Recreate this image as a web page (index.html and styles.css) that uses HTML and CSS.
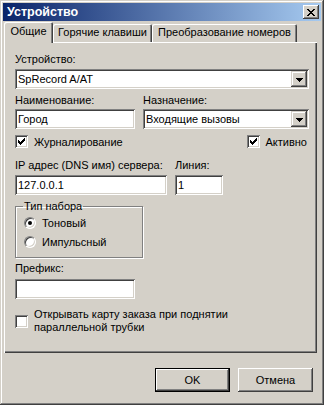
FILE: index.html
```html
<!DOCTYPE html>
<html lang="ru">
<head>
<meta charset="utf-8">
<title>Устройство</title>
<link rel="stylesheet" href="styles.css">
</head>
<body>
<div class="window">
  <div class="titlebar">
    <span class="title">Устройство</span>
    <span class="close"><svg width="8" height="7" viewBox="0 0 8 7" shape-rendering="crispEdges"><path d="M0 0h2v1h-2zM6 0h2v1h-2zM1 1h2v1h-2zM5 1h2v1h-2zM2 2h4v1h-4zM3 3h2v1h-2zM2 4h4v1h-4zM1 5h2v1h-2zM5 5h2v1h-2zM0 6h2v1h-2zM6 6h2v1h-2z" fill="#000"/></svg></span>
  </div>
  <div class="body">
    <div class="tabs">
      <div class="tab active">Общие</div>
      <div class="tab t2">Горячие клавиши</div>
      <div class="tab t3">Преобразование номеров</div>
    </div>
    <div class="panel">
      <div class="lbl">Устройство:</div>
      <div class="combo device"><span class="val">SpRecord A/AT</span><span class="arrow"><svg width="7" height="4" viewBox="0 0 7 4" shape-rendering="crispEdges"><path d="M0 0h7v1h-7zM1 1h5v1h-5zM2 2h3v1h-3zM3 3h1v1h-1z" fill="#000"/></svg></span></div>
      <div class="row r2">
        <div class="col c-name">
          <div class="lbl">Наименование:</div>
          <div class="edit e-name">Город</div>
        </div>
        <div class="col c-dest">
          <div class="lbl">Назначение:</div>
          <div class="combo dest"><span class="val">Входящие вызовы</span><span class="arrow"><svg width="7" height="4" viewBox="0 0 7 4" shape-rendering="crispEdges"><path d="M0 0h7v1h-7zM1 1h5v1h-5zM2 2h3v1h-3zM3 3h1v1h-1z" fill="#000"/></svg></span></div>
        </div>
      </div>
      <div class="row checks">
        <div class="check"><span class="box"><svg width="7" height="7" viewBox="0 0 7 7" shape-rendering="crispEdges"><path d="M0 2h1v3h-1zM1 3h1v3h-1zM2 4h1v3h-1zM3 3h1v3h-1zM4 2h1v3h-1zM5 1h1v3h-1zM6 0h1v3h-1z" fill="#000"/></svg></span><span>Журналирование</span></div>
        <div class="check active-chk"><span class="box"><svg width="7" height="7" viewBox="0 0 7 7" shape-rendering="crispEdges"><path d="M0 2h1v3h-1zM1 3h1v3h-1zM2 4h1v3h-1zM3 3h1v3h-1zM4 2h1v3h-1zM5 1h1v3h-1zM6 0h1v3h-1z" fill="#000"/></svg></span><span>Активно</span></div>
      </div>
      <div class="row r4">
        <div class="col c-ip">
          <div class="lbl">IP адрес (DNS имя) сервера:</div>
          <div class="edit e-ip">127.0.0.1</div>
        </div>
        <div class="col c-line">
          <div class="lbl">Линия:</div>
          <div class="edit e-line">1</div>
        </div>
      </div>
      <fieldset class="group">
        <legend>Тип набора</legend>
        <div class="radio-row"><span class="radio on"></span><span>Тоновый</span></div>
        <div class="radio-row"><span class="radio"></span><span>Импульсный</span></div>
      </fieldset>
      <div class="lbl l-prefix">Префикс:</div>
      <div class="edit e-prefix"></div>
      <div class="check multi"><span class="box"></span><span class="mtext">Открывать карту заказа при поднятии<br>параллельной трубки</span></div>
    </div>
    <div class="buttons">
      <div class="btn default"><span>OK</span></div>
      <div class="btn"><span>Отмена</span></div>
    </div>
  </div>
</div>
</body>
</html>
```
FILE: styles.css
```css
* { box-sizing: border-box; }
html, body { margin: 0; padding: 0; }
body {
  width: 324px;
  height: 405px;
  background: #D4D0C8;
  font-family: "Liberation Sans", Arial, sans-serif;
  font-size: 11px;
  color: #000;
  overflow: hidden;
}
.window {
  width: 324px;
  height: 405px;
  padding: 3px;
  background: #D4D0C8;
  box-shadow: inset -1px -1px #404040, inset 1px 1px #D4D0C8, inset -2px -2px #808080, inset 2px 2px #fff;
  display: flex;
  flex-direction: column;
}
.titlebar {
  height: 18px;
  flex: none;
  background: linear-gradient(to right, #0A246A, #A6CAF0);
  display: flex;
  align-items: center;
  justify-content: space-between;
  padding: 0 2px 0 4px;
  color: #fff;
  font-weight: bold;
  font-size: 12.5px;
}
.close {
  width: 16px;
  height: 14px;
  background: #D4D0C8;
  box-shadow: inset -1px -1px #404040, inset 1px 1px #fff, inset -2px -2px #808080;
  display: flex;
  align-items: center;
  justify-content: center;
  padding-right: 1px;
}
.close svg { display: block; }
.body {
  flex: 1;
  display: flex;
  flex-direction: column;
  padding: 1px 4px 0 1px;
}
.tabs {
  display: flex;
  height: 20px;
  flex: none;
  align-items: flex-start;
}
.tab {
  height: 18px;
  margin-top: 2px;
  line-height: 17px;
  text-align: center;
  background: #D4D0C8;
  box-shadow: inset 1px 1px #fff, inset -1px 0 #404040, inset -2px 0 #808080;
  border-top-left-radius: 2px;
  border-top-right-radius: 2px;
}
.tab.active {
  width: 49px;
  height: 21px;
  margin-top: 0;
  line-height: 19px;
  position: relative;
  z-index: 1;
}
.t2 { width: 99px; }
.t3 { width: 145px; }
.panel {
  flex: none;
  height: 311px;
  width: 313px;
  padding: 11px 8px 0 11px;
  box-shadow: inset 1px 1px #fff, inset -1px -1px #404040, inset -2px -2px #808080;
  display: flex;
  flex-direction: column;
}
.lbl {
  height: 13px;
  line-height: 13px;
  white-space: nowrap;
}
.edit, .combo {
  height: 20px;
  background: #fff;
  box-shadow: inset 1px 1px #808080, inset -1px -1px #fff, inset 2px 2px #404040, inset -2px -2px #D4D0C8;
  padding: 0 3px;
  line-height: 20px;
  white-space: nowrap;
}
.combo {
  display: flex;
  align-items: center;
  justify-content: space-between;
  padding: 2px 2px 2px 3px;
}
.combo .val { line-height: 16px; }
.arrow {
  width: 16px;
  height: 16px;
  background: #D4D0C8;
  box-shadow: inset -1px -1px #404040, inset 1px 1px #D4D0C8, inset -2px -2px #808080, inset 2px 2px #fff;
  display: flex;
  align-items: center;
  justify-content: center;
  padding-top: 1px;
}
.arrow svg { display: block; }
.device { margin-top: 3px; }
.row { display: flex; }
.col { display: flex; flex-direction: column; }
.r2 { margin-top: 5px; gap: 8px; }
.r2 .edit, .r2 .combo { margin-top: 2px; }
.c-name { width: 120px; }
.c-dest { width: 166px; }
.checks {
  margin-top: 6px;
  justify-content: space-between;
  padding-right: 2px;
}
.check {
  display: flex;
  align-items: center;
  gap: 6px;
  height: 13px;
}
.box {
  width: 13px;
  height: 13px;
  flex: none;
  background: #fff;
  box-shadow: inset 1px 1px #808080, inset -1px -1px #fff, inset 2px 2px #404040, inset -2px -2px #D4D0C8;
  display: flex;
  align-items: center;
  justify-content: center;
}
.box svg { display: block; }
.r4 { margin-top: 11px; gap: 8px; }
.r4 .edit { margin-top: 3px; }
.c-ip { width: 152px; }
.c-line { width: 48px; }
.group {
  margin: 5px 0 0 0;
  padding: 0 0 6px 8px;
  width: 128px;
  border: 1px solid #808080;
  box-shadow: inset 1px 1px #fff, 1px 1px #fff;
  min-width: 0;
}
.group legend {
  padding: 0 1px;
  margin-left: -1px;
  line-height: 13px;
}
.radio-row {
  display: flex;
  align-items: center;
  gap: 6px;
  height: 19px;
}
.radio {
  width: 12px;
  height: 12px;
  flex: none;
  border-radius: 50%;
  background: #fff;
  border: 1px solid;
  border-color: #808080 #fff #fff #808080;
  box-shadow: inset 1px 1px #404040, inset -1px -1px #D4D0C8;
  display: flex;
  align-items: center;
  justify-content: center;
}
.radio.on::after {
  content: "";
  width: 4px;
  height: 4px;
  border-radius: 50%;
  background: #000;
}
.l-prefix { margin-top: 4px; }
.e-prefix { width: 120px; margin-top: 4px; }
.multi {
  height: 26px;
  margin-top: 9px;
  align-items: center;
}
.mtext { line-height: 13px; }
.buttons {
  display: flex;
  justify-content: flex-end;
  gap: 8px;
  margin-top: 15px;
  padding-right: 4px;
}
.btn {
  width: 75px;
  height: 24px;
  background: #D4D0C8;
  box-shadow: inset -1px -1px #404040, inset 1px 1px #fff, inset -2px -2px #808080, inset 2px 2px #D4D0C8;
  display: flex;
  align-items: center;
  justify-content: center;
}
.btn.default {
  border: 1px solid #000;
}
```
